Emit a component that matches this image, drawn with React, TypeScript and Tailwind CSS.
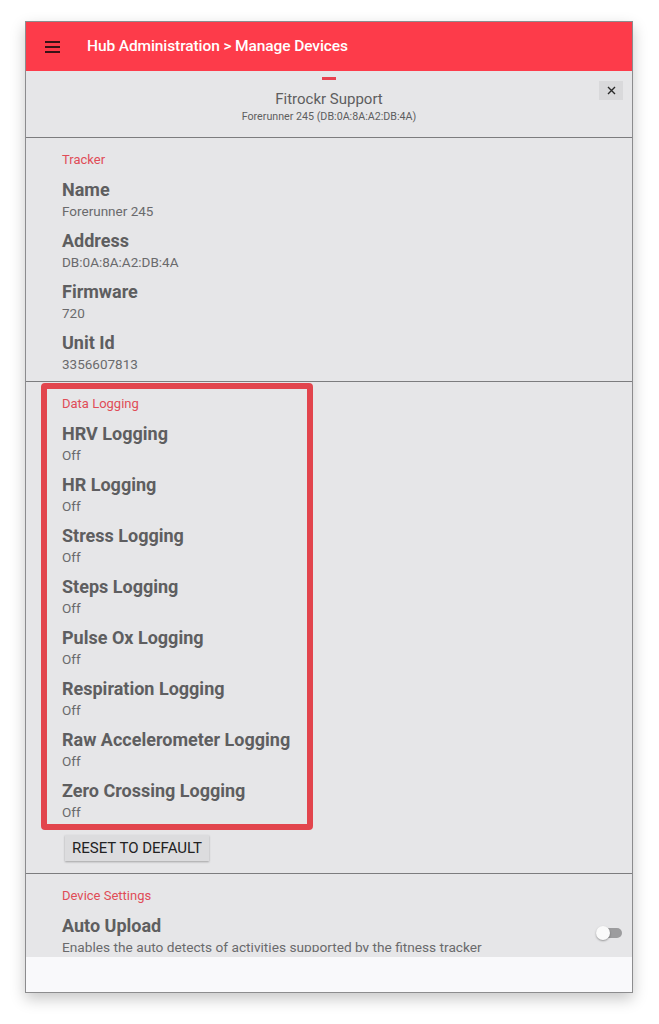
import React from 'react';

const font = { fontFamily: 'Roboto, "Noto Sans", sans-serif' };

interface FieldProps {
  title: string;
  value: string;
}

const Field: React.FC<FieldProps> = ({ title, value }) => (
  <div className="pt-[10px]">
    <div className="text-[18px] leading-[22px] font-bold text-[#5e5e60]">{title}</div>
    <div className="mt-[1px] text-[13.5px] leading-[18px] text-[#6a6a6c]">{value}</div>
  </div>
);

const SectionLabel: React.FC<{ children: React.ReactNode }> = ({ children }) => (
  <div className="mb-[1px] text-[13px] leading-[16px] text-[#e04c57]">{children}</div>
);

const trackerFields = [
  { title: 'Name', value: 'Forerunner 245' },
  { title: 'Address', value: 'DB:0A:8A:A2:DB:4A' },
  { title: 'Firmware', value: '720' },
  { title: 'Unit Id', value: '3356607813' },
];

const loggingFields = [
  'HRV Logging',
  'HR Logging',
  'Stress Logging',
  'Steps Logging',
  'Pulse Ox Logging',
  'Respiration Logging',
  'Raw Accelerometer Logging',
  'Zero Crossing Logging',
];

export default function App() {
  return (
    <div className="w-[659px] h-[1024px] bg-white pt-[21px] pl-[25px]" style={font}>
      <div className="w-[608px] h-[972px] border border-[#8c8c8e] bg-[#f9f9fb] flex flex-col overflow-hidden shadow-[0_6px_14px_rgba(0,0,0,0.22)]">
        {/* header */}
        <div className="h-[49px] shrink-0 bg-[#fd3b4a] flex items-center">
          <div className="ml-[19px] w-[15px] flex flex-col gap-[3px]">
            <span className="block h-[2px] bg-[#3a1216]" />
            <span className="block h-[2px] bg-[#3a1216]" />
            <span className="block h-[2px] bg-[#3a1216]" />
          </div>
          <span className="ml-[27px] text-[15.5px] font-medium text-white tracking-[-0.1px]">
            Hub Administration &gt; Manage Devices
          </span>
        </div>

        {/* content */}
        <div className="h-[886px] shrink-0 bg-[#e6e6e8]">
          <div className="h-[881px] overflow-hidden">
            {/* device head */}
            <div className="relative h-[67px] border-b border-[#7c7c7e] flex flex-col items-center">
              <span className="mt-[6px] block w-[14px] h-[3px] bg-[#e8424f]" />
              <div className="mt-[9px] text-[15px] leading-[20px] text-[#5e5e60]">Fitrockr Support</div>
              <div className="mt-[1px] text-[10.7px] leading-[14px] text-[#5e5e60]">
                Forerunner 245 (DB:0A:8A:A2:DB:4A)
              </div>
              <button
                type="button"
                className="absolute right-[9px] top-[10px] w-[24px] h-[19px] bg-[#d9d9db] flex items-center justify-center"
              >
                <svg width="9" height="9" viewBox="0 0 9 9" fill="none" stroke="#2a2a2a" strokeWidth="1.4">
                  <path d="M1 1L8 8M8 1L1 8" />
                </svg>
              </button>
            </div>

            {/* tracker */}
            <div className="px-[36px] pt-[14px] pb-[8px] border-b border-[#7c7c7e]">
              <SectionLabel>Tracker</SectionLabel>
              {trackerFields.map((f) => (
                <Field key={f.title} title={f.title} value={f.value} />
              ))}
            </div>

            {/* data logging */}
            <div className="relative px-[36px] pt-[14px] pb-[12px] border-b border-[#7c7c7e]">
              <SectionLabel>Data Logging</SectionLabel>
              {loggingFields.map((t) => (
                <Field key={t} title={t} value="Off" />
              ))}
              <button
                type="button"
                className="mt-[14px] ml-[3px] h-[26px] px-[7px] bg-[#dcdcde] text-[15px] text-[#222] shadow-[0_1px_2px_rgba(0,0,0,0.3)]"
              >
                RESET TO DEFAULT
              </button>
              <div className="absolute left-[15px] top-[1px] w-[272px] h-[447px] border-[6px] border-[#e2454d] rounded-[4px]" />
            </div>

            {/* device settings */}
            <div className="px-[36px] pt-[14px]">
              <SectionLabel>Device Settings</SectionLabel>
              <div className="pt-[10px] flex items-start">
                <div className="flex-1">
                  <div className="text-[18px] leading-[22px] font-bold text-[#5e5e60]">Auto Upload</div>
                  <div className="mt-[1px] text-[13.7px] leading-[18px] text-[#6a6a6c]">
                    Enables the auto detects of activities supported by the fitness tracker
                  </div>
                </div>
                <div className="relative mt-[12px] mr-[-26px] w-[26px] h-[12px]">
                  <span className="absolute right-0 top-[1px] w-[22px] h-[10px] rounded-full bg-[#9c9c9e]" />
                  <span className="absolute left-0 top-[-1px] w-[14px] h-[14px] rounded-full bg-[#fafafa] shadow-[0_1px_2px_rgba(0,0,0,0.35)]" />
                </div>
              </div>
            </div>
          </div>
        </div>
      </div>
    </div>
  );
}
